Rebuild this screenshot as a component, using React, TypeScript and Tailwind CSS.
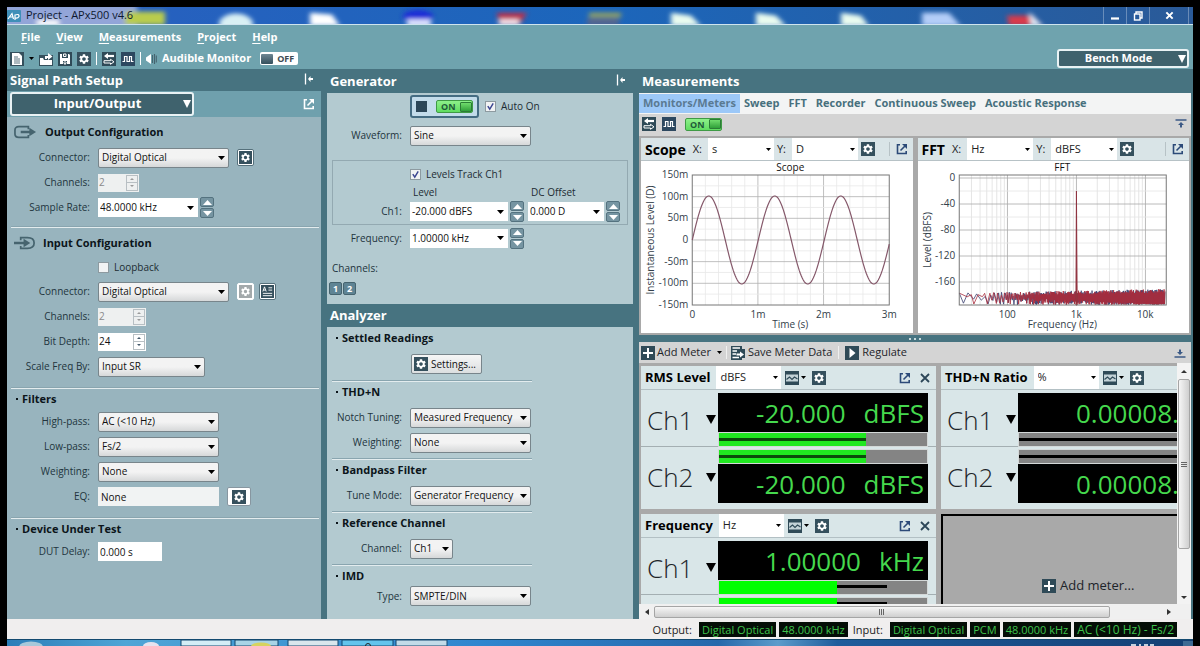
import type { ReactNode } from "react";
import clsx from "clsx";
import { MdSettings } from "react-icons/md";

/* ---------- icons ---------- */

function GearIcon({ muted = false, small = false }: { muted?: boolean; small?: boolean }) {
  return (
    <span
      className={clsx(
        "flex shrink-0 items-center justify-center text-white",
        small ? "size-[13px]" : "size-[14px]",
        muted ? "bg-[#a3a9ab]" : "bg-[#35505d]",
      )}
    >
      <MdSettings className={small ? "size-[11px]" : "size-[12px]"} />
    </span>
  );
}

function LoopIcon() {
  return (
    <svg viewBox="0 0 14 14" className="size-[14px] shrink-0">
      <rect width="14" height="14" fill="#2f4a57" />
      <path d="M12 4H5" stroke="#fff" strokeWidth="2.200" />
      <path d="M6 1L2 4L6 7z" fill="#fff" />
      <path d="M2 8.700H8.500V7.300L12 9.800L8.500 12.300V11H2z" fill="none" stroke="#fff" />
    </svg>
  );
}

function PulseIcon() {
  return (
    <svg viewBox="0 0 14 14" className="size-[14px] shrink-0">
      <rect width="14" height="14" fill="#2d4860" />
      <path d="M1.500 9.500H3.500V4.500H6V9.500H8.500V4.500H10.500V9.500H12.500" fill="none" stroke="#fff" strokeWidth="1.200" />
    </svg>
  );
}

function PopOutIcon({ color = "#2c4a78" }: { color?: string }) {
  return (
    <svg viewBox="0 0 12 12" className="size-[12px] shrink-0" fill="none" stroke={color} strokeWidth="1.600">
      <path d="M4 1.800H1.500V10.500H10.200V8" />
      <path d="M4.500 7.500L9.500 2.500" />
      <path d="M6 1H11V6z" fill={color} stroke="none" />
    </svg>
  );
}

function CollapseIcon() {
  return (
    <svg viewBox="0 0 12 12" className="size-[12px]">
      <path d="M2.500 0.500V11.500" stroke="#fff" strokeWidth="1.300" />
      <path d="M5 6L7.500 3V5H10V7H7.500V9z" fill="#fff" />
    </svg>
  );
}

function DockIcon({ up = false }: { up?: boolean }) {
  return (
    <svg viewBox="0 0 12 10" className="h-[10px] w-[12px]">
      <g transform={up ? "rotate(180 6 5)" : undefined}>
        <path d="M0.500 1H11.500" stroke="#3c5a86" strokeWidth="1.500" />
        <path d="M6 3L9 6H7V8.500H5V6H3z" fill="#3c5a86" />
      </g>
    </svg>
  );
}

function GraphIcon() {
  return (
    <svg viewBox="0 0 14 14" className="size-[14px] shrink-0">
      <rect width="14" height="14" fill="#2f4a57" />
      <rect x="1" y="3.500" width="12" height="7" fill="#c3d2d7" />
      <path d="M1.500 8.500L4.500 6L7 8.500L9.500 6L12.500 8" fill="none" stroke="#2f4a57" strokeWidth="1.200" />
    </svg>
  );
}

function PlusIcon() {
  return (
    <svg viewBox="0 0 14 14" className="size-[14px] shrink-0">
      <rect width="14" height="14" fill="#2f4a57" />
      <path d="M7 2V12M2 7H12" stroke="#fff" strokeWidth="2" />
    </svg>
  );
}

function Triangle({ className = "h-[4px] w-[7px] text-black", up = false }: { className?: string; up?: boolean }) {
  return (
    <svg viewBox="0 0 8 4" preserveAspectRatio="none" className={clsx("shrink-0", className)}>
      <path d={up ? "M0 4H8L4 0z" : "M0 0H8L4 4z"} fill="currentColor" />
    </svg>
  );
}

/* ---------- form controls ---------- */

type FieldProps = { label: string; value: string; w: string };

function Select({ label, value, w }: FieldProps) {
  return (
    <span className={clsx("grid h-5 shrink-0 items-center", w)}>
      <select
        aria-label={label}
        defaultValue={value}
        className="col-start-1 row-start-1 h-5 w-full appearance-none rounded-[2px] border border-[#78858b] bg-linear-to-b from-[#f3f3f3] from-50% to-[#d6d8d9] pl-[3px] text-[10px] text-[#111]"
      >
        <option>{value}</option>
      </select>
      <Triangle className="pointer-events-none col-start-1 row-start-1 mr-[4px] h-[4px] w-[7px] justify-self-end text-black" />
    </span>
  );
}

function FlatSelect({ label, value, w }: FieldProps) {
  return (
    <span className={clsx("grid h-full shrink-0 items-center bg-white", w)}>
      <select
        aria-label={label}
        defaultValue={value}
        className="col-start-1 row-start-1 h-full w-full appearance-none pl-[4px] text-[11px] text-[#222]"
      >
        <option>{value}</option>
      </select>
      <Triangle className="pointer-events-none col-start-1 row-start-1 mr-[3px] h-[3px] w-[5px] justify-self-end text-black" />
    </span>
  );
}

function BigSpinner({ label }: { label: string }) {
  return (
    <span className="flex w-[14px] shrink-0 flex-col gap-[1px]">
      <button aria-label={`Increase ${label}`} className="flex h-[10px] items-center justify-center rounded-[2px] border border-[#54727f] bg-[#7695a2]">
        <Triangle up className="h-[5px] w-[9px] text-white" />
      </button>
      <button aria-label={`Decrease ${label}`} className="flex h-[10px] items-center justify-center rounded-[2px] border border-[#54727f] bg-[#7695a2]">
        <Triangle className="h-[5px] w-[9px] text-white" />
      </button>
    </span>
  );
}

function Combo({ label, value, w }: FieldProps) {
  return (
    <span className="flex items-center gap-[2px]">
      <span className={clsx("flex h-[19px] items-center bg-white pr-[4px]", w)}>
        <input aria-label={label} defaultValue={value} className="w-full min-w-0 bg-transparent pl-[2px] text-[10px] text-[#111]" />
        <button aria-label={`${label} choices`}>
          <Triangle />
        </button>
      </span>
      <BigSpinner label={label} />
    </span>
  );
}

function NumberBox({ label, value, w, disabled = false }: FieldProps & { disabled?: boolean }) {
  const tone = disabled ? "text-[#9a9a9a]" : "text-[#44586a]";
  return (
    <span className={clsx("flex h-[18px] items-center pr-[1px]", w, disabled ? "bg-[#eef0f0]" : "bg-white")}>
      <input
        aria-label={label}
        defaultValue={value}
        disabled={disabled}
        className={clsx("w-full min-w-0 bg-transparent pl-[1px] text-[10px]", disabled ? "text-[#8a8a8a]" : "text-[#111]")}
      />
      <span className={clsx("flex w-[12px] shrink-0 flex-col", tone)}>
        <button aria-label={`Increase ${label}`} disabled={disabled} className="flex h-[8px] items-center justify-center border border-[#b8bfc3]">
          <Triangle up className="h-[2px] w-[4px]" />
        </button>
        <button aria-label={`Decrease ${label}`} disabled={disabled} className="flex h-[8px] items-center justify-center border border-t-0 border-[#b8bfc3]">
          <Triangle className="h-[2px] w-[4px]" />
        </button>
      </span>
    </span>
  );
}

function Check({ children, checked = false }: { children: string; checked?: boolean }) {
  return (
    <label className="flex items-center gap-[5px] text-[10px] text-[#1d2c33]">
      <span className="grid size-[11px] place-items-center">
        <input
          type="checkbox"
          defaultChecked={checked}
          className="peer col-start-1 row-start-1 size-[11px] appearance-none border border-[#8d9aa0] bg-[#f1f3f4]"
        />
        <svg viewBox="0 0 10 10" className="pointer-events-none col-start-1 row-start-1 hidden size-[9px] peer-checked:block">
          <path d="M2 4.500L4.200 8L8 1.500" fill="none" stroke="#3a4590" strokeWidth="1.600" />
        </svg>
      </span>
      {children}
    </label>
  );
}

function OnSwitch() {
  return (
    <button
      aria-pressed="true"
      className="flex h-[13px] w-[37px] items-center justify-between rounded-[2px] border border-[#3f9a45] bg-linear-to-b from-[#8df08a] to-[#5fdc60] pl-[4px] text-[9px] leading-none font-bold text-[#1f5a3a]"
    >
      ON
      <span className="h-[10px] w-[12px] rounded-[1px] border border-[#2c7d36] bg-linear-to-b from-[#6fdc6c] to-[#2fa03a]" />
    </button>
  );
}

function IconButton({ label, children, className }: { label: string; children: ReactNode; className?: string }) {
  return (
    <button aria-label={label} className={clsx("flex shrink-0 items-center justify-center", className)}>
      {children}
    </button>
  );
}

function Row({ label, labelW, children, h = "h-[25px]" }: { label: string; labelW: string; children: ReactNode; h?: string }) {
  return (
    <div className={clsx("flex items-center gap-[8px]", h)}>
      <span className={clsx("shrink-0 text-right text-[10px] whitespace-nowrap text-[#22343d]", labelW)}>{label}</span>
      {children}
    </div>
  );
}

function BulletTitle({ children }: { children: string }) {
  return (
    <h3 className="flex h-[20px] items-center gap-[4px] pl-[9px] text-[11px] font-bold text-[#0c151a]">
      <span className="size-[2px] bg-[#0c151a]" />
      {children}
    </h3>
  );
}

function Rule({ className }: { className?: string }) {
  return <hr className={clsx("h-[2px] border-0 border-b border-b-[#e3ecee] bg-[#89a5af]", className)} />;
}

/* ---------- window chrome ---------- */

function TitleBar() {
  return (
    <header className="relative flex h-[18px] shrink-0 items-center overflow-hidden border-b border-[#cfe4ee]">
      <svg viewBox="0 0 1186 18" preserveAspectRatio="none" className="absolute inset-0 h-full w-full">
        <defs>
          <filter id="glass" x="-20%" y="-50%" width="140%" height="200%">
            <feGaussianBlur stdDeviation="2.500" />
          </filter>
          <linearGradient id="sky">
            <stop offset="0" stopColor="#2a5fc0" />
            <stop offset="0.500" stopColor="#1c66bb" />
            <stop offset="1" stopColor="#2a5a98" />
          </linearGradient>
        </defs>
        <rect width="1186" height="18" fill="url(#sky)" />
        <g filter="url(#glass)">
          <rect x="-10" y="-4" width="140" height="26" fill="#93a5d8" />
          <rect x="118" y="5" width="40" height="14" fill="#b9cc4e" />
          <rect x="30" y="14" width="22" height="6" fill="#fff" />
          <ellipse cx="229" cy="18" rx="17" ry="11" fill="#d9f0f4" />
          <path d="M303 6L325 8L333 20H303z" fill="#fff" />
          <ellipse cx="411" cy="10" rx="15" ry="7" fill="#1d2ed6" />
          <rect x="400" y="13" width="24" height="8" fill="#dfe4ff" />
          <path d="M490 6H520L512 20H492z" fill="#b8304e" />
          <rect x="492" y="13" width="20" height="6" fill="#f5e6ee" />
          <rect x="582" y="6" width="32" height="5" fill="#93a063" />
          <rect x="580" y="12" width="32" height="8" fill="#54658f" />
          <path d="M664 6L684 9L694 20H664z" fill="#e9fbef" />
          <path d="M749 6L769 9L779 20H749z" fill="#e9fbef" />
          <path d="M834 6L854 9L862 20H834z" fill="#e9fbef" />
          <path d="M915 6H942L954 20H915z" fill="#b3cdf8" />
          <path d="M1000 9H1026L1036 20H1002z" fill="#d83a4c" />
          <path d="M1022 5L1036 20H1024z" fill="#dfeaf6" />
        </g>
      </svg>
      <span className="relative flex items-center gap-[5px]">
        <svg viewBox="0 0 14 12" className="h-[12px] w-[14px]">
          <rect width="14" height="12" rx="1" fill="#3f8fb8" />
          <path d="M1 9L5 3.500L6.500 9M3 7H6.500M8 10V5Q12.500 3.500 12 6.500Q11 8.500 8 8" fill="none" stroke="#fff" strokeWidth="1.200" />
        </svg>
        <h1 className="text-[11px] text-[#0d1830]">Project - APx500 v4.6</h1>
      </span>
      <span className="relative mr-[4px] ml-auto flex h-full text-white">
        <IconButton label="Minimize" className="w-[23px] border-l border-white/30">
          <svg viewBox="0 0 10 10" className="size-[10px]">
            <path d="M1 7.500H9" stroke="#fff" strokeWidth="2.200" />
          </svg>
        </IconButton>
        <IconButton label="Restore" className="w-[23px] border-l border-white/30">
          <svg viewBox="0 0 10 10" className="size-[10px]" fill="none" stroke="#fff" strokeWidth="1.400">
            <path d="M3 3V1H9V7H7" />
            <rect x="1.500" y="3" width="5.500" height="6" />
          </svg>
        </IconButton>
        <IconButton label="Close" className="w-[40px] border-x border-white/30">
          <svg viewBox="0 0 10 10" className="size-[9px]">
            <path d="M1.500 1.500L8.500 8.500M8.500 1.500L1.500 8.500" stroke="#fff" strokeWidth="2.200" />
          </svg>
        </IconButton>
      </span>
    </header>
  );
}

const menus: [string, string][] = [
  ["F", "ile"],
  ["V", "iew"],
  ["M", "easurements"],
  ["P", "roject"],
  ["H", "elp"],
];

function ModeButton({ children, className }: { children: string; className: string }) {
  return (
    <button
      className={clsx(
        "flex items-center rounded-[3px] border-2 border-[#e9f2f4] bg-[#3f626d] font-bold text-white",
        className,
      )}
    >
      <span className="flex-1 text-center">{children}</span>
      <Triangle className="mr-[1px] h-[8px] w-[8px] text-white" />
    </button>
  );
}

function MenuAndToolbar() {
  return (
    <div className="flex h-[44px] shrink-0 items-end justify-between bg-[#6fa3ae] pr-[4px]">
      <div className="flex h-full flex-col">
        <nav className="flex h-[25px] items-center gap-[16px] pl-[14px] text-[11px] font-bold text-white">
          {menus.map(([key, rest]) => (
            <a key={key} href="#menu">
              <span className="underline underline-offset-2">{key}</span>
              {rest}
            </a>
          ))}
        </nav>
        <div className="flex h-[17px] items-center gap-[5px] pl-[3px]">
          <IconButton label="New" className="gap-[5px]">
            <svg viewBox="0 0 14 14" className="size-[14px]">
              <rect width="14" height="14" fill="#35505d" />
              <path d="M2 1H9L12 4V13H2z" fill="#fff" />
              <path d="M4 5H8M4 7H10M4 9H10M4 11H10" stroke="#5d7580" strokeWidth="1" />
            </svg>
            <Triangle className="h-[3px] w-[5px] text-black" />
          </IconButton>
          <IconButton label="Open">
            <svg viewBox="0 0 14 14" className="size-[14px]">
              <rect y="3" width="14" height="11" fill="#35505d" />
              <path d="M1 13V6H4L5 8H13V13z" fill="#fff" />
              <path d="M6 7V4H9V1L13.500 4.500L9 8V6H8V7z" fill="#fff" />
            </svg>
          </IconButton>
          <IconButton label="Save">
            <svg viewBox="0 0 14 14" className="size-[14px]">
              <rect width="14" height="14" fill="#2f4a57" />
              <path d="M2 2H4V6H10V2H11L12 3V12H9V9H5V12H2z" fill="#fff" />
              <path d="M7 8V12M5.500 10.500L7 12.500L8.500 10.500M5.500 2H8V4.500H5.500z" stroke="#fff" fill="none" />
            </svg>
          </IconButton>
          <IconButton label="Settings">
            <GearIcon />
          </IconButton>
          <span className="h-[13px] w-[1px] bg-white" />
          <IconButton label="Signal path">
            <LoopIcon />
          </IconButton>
          <IconButton label="Generator pulse">
            <PulseIcon />
          </IconButton>
          <span className="h-[13px] w-[1px] bg-white" />
          <svg viewBox="0 0 11 12" className="h-[12px] w-[11px]">
            <path d="M0 4.500L5 1V11L0 7.500z" fill="#fff" />
            <path d="M6.500 2V10M8.500 1V11M10.300 2.500V9.500" stroke="#46646f" strokeWidth="1.100" />
          </svg>
          <span className="text-[11px] font-bold text-white">Audible Monitor</span>
          <button
            aria-pressed="false"
            className="ml-[4px] flex h-[13px] w-[38px] items-center justify-between rounded-[2px] bg-white pr-[4px] pl-[1px] text-[9px] leading-none font-bold text-[#3c4a52]"
          >
            <span className="h-[10px] w-[12px] rounded-[1px] bg-linear-to-b from-[#6f8793] to-[#35505d]" />
            OFF
          </button>
        </div>
      </div>
      <ModeButton className="mb-[1px] h-[19px] w-[132px] text-[11px]">Bench Mode</ModeButton>
    </div>
  );
}

function PanelHeader({ title, collapsible = false, h = "h-[24px]" }: { title: string; collapsible?: boolean; h?: string }) {
  return (
    <div className={clsx("flex shrink-0 items-center justify-between pr-[6px] pl-[3px]", h)}>
      <h2 className="text-[13px] leading-none font-bold text-white">{title}</h2>
      {collapsible && (
        <IconButton label={`Collapse ${title}`} className="pb-[2px]">
          <CollapseIcon />
        </IconButton>
      )}
    </div>
  );
}

/* ---------- signal path ---------- */

const LW = "w-[83px]";

function SignalPath() {
  return (
    <section className="flex w-[314px] shrink-0 flex-col">
      <PanelHeader title="Signal Path Setup" collapsible h="h-[22px]" />
      <div className="flex h-[26px] items-center justify-between bg-[#6fa0ad] pr-[6px] pl-[3px]">
        <ModeButton className="h-[24px] w-[184px] text-[13px]">Input/Output</ModeButton>
        <IconButton label="Open signal path">
          <PopOutIcon color="#fff" />
        </IconButton>
      </div>
      <div className="min-h-0 flex-1 bg-[#98b4be]">
        <h3 className="flex h-[28px] items-center gap-[8px] pt-[2px] pl-[7px] text-[11px] font-bold text-[#0c151a]">
          <svg viewBox="0 0 24 14" className="h-[14px] w-[23px]" fill="none">
            <path d="M15 4V1.500H5Q1 1.500 1 5V9Q1 12.500 5 12.500H15V10" stroke="#46646f" strokeWidth="1.800" />
            <path d="M7 7H17" stroke="#46646f" strokeWidth="2.600" />
            <path d="M16 2.500L23 7L16 11.500z" fill="#46646f" />
          </svg>
          Output Configuration
        </h3>
        <Row label="Connector:" labelW={LW}>
          <Select label="Output connector" value="Digital Optical" w="w-[131px]" />
          <IconButton label="Output settings" className="size-[17px] rounded-[2px] border border-[#55707b] bg-white">
            <GearIcon small />
          </IconButton>
        </Row>
        <Row label="Channels:" labelW={LW}>
          <NumberBox label="Output channels" value="2" w="w-[41px]" disabled />
        </Row>
        <Row label="Sample Rate:" labelW={LW}>
          <Combo label="Sample rate" value="48.0000 kHz" w="w-[100px]" />
        </Row>
        <Rule className="mt-[6px] mr-[2px] ml-[4px]" />
        <h3 className="flex h-[28px] items-center gap-[6px] pt-[2px] pl-[7px] text-[11px] font-bold text-[#0c151a]">
          <svg viewBox="0 0 24 14" className="h-[14px] w-[23px]" fill="none">
            <path d="M7 4V1.500H14Q21 1.500 21 7Q21 12.500 14 12.500H7V10" stroke="#46646f" strokeWidth="1.800" />
            <path d="M0 7H11" stroke="#46646f" strokeWidth="2.600" />
            <path d="M10 2.500L17 7L10 11.500z" fill="#46646f" />
          </svg>
          Input Configuration
        </h3>
        <div className="flex h-[23px] items-center pl-[91px]">
          <Check>Loopback</Check>
        </div>
        <Row label="Connector:" labelW={LW}>
          <Select label="Input connector" value="Digital Optical" w="w-[131px]" />
          <span className="flex gap-[5px]">
            <IconButton label="Input settings" className="size-[17px] rounded-[2px] border border-white bg-white">
              <GearIcon muted small />
            </IconButton>
            <IconButton label="Input metadata" className="size-[17px] rounded-[2px] border border-[#55707b] bg-white">
              <svg viewBox="0 0 14 14" className="size-[13px]">
                <rect width="14" height="14" fill="#35505d" />
                <path d="M2 7L3.800 2L5.600 7M2.500 5.500H5M8 3H12M8 5.500H12M2 9H12M2 11.500H12" stroke="#fff" fill="none" />
              </svg>
            </IconButton>
          </span>
        </Row>
        <Row label="Channels:" labelW={LW}>
          <NumberBox label="Input channels" value="2" w="w-[48px]" disabled />
        </Row>
        <Row label="Bit Depth:" labelW={LW}>
          <NumberBox label="Bit depth" value="24" w="w-[48px]" />
        </Row>
        <Row label="Scale Freq By:" labelW={LW}>
          <Select label="Scale frequency by" value="Input SR" w="w-[107px]" />
        </Row>
        <Rule className="mt-[8px] mr-[2px] ml-[4px]" />
        <BulletTitle>Filters</BulletTitle>
        <Row label="High-pass:" labelW={LW}>
          <Select label="High-pass" value="AC (&lt;10 Hz)" w="w-[121px]" />
        </Row>
        <Row label="Low-pass:" labelW={LW}>
          <Select label="Low-pass" value="Fs/2" w="w-[121px]" />
        </Row>
        <Row label="Weighting:" labelW={LW}>
          <Select label="Filter weighting" value="None" w="w-[121px]" />
        </Row>
        <Row label="EQ:" labelW={LW}>
          <input aria-label="EQ" defaultValue="None" className="h-[19px] w-[121px] bg-[#f1f3f3] pl-[3px] text-[10px] text-[#111]" />
          <IconButton label="EQ settings" className="h-[19px] w-[24px] rounded-[2px] border border-[#8796a0] bg-white">
            <GearIcon />
          </IconButton>
        </Row>
        <Rule className="mt-[8px] mr-[2px] ml-[4px]" />
        <BulletTitle>Device Under Test</BulletTitle>
        <Row label="DUT Delay:" labelW={LW}>
          <input aria-label="DUT delay" defaultValue="0.000 s" className="h-[19px] w-[64px] bg-white pl-[2px] text-[10px] text-[#111]" />
        </Row>
      </div>
    </section>
  );
}

/* ---------- generator and analyzer ---------- */

const MW = "w-[75px]";

function GeneratorAnalyzer() {
  return (
    <div className="flex w-[306px] shrink-0 flex-col">
      <PanelHeader title="Generator" collapsible />
      <section className="h-[211px] shrink-0 bg-[#b3cad0] pt-[1px]">
        <div className="flex h-[25px] items-center gap-[6px] pl-[83px]">
          <span className="flex h-[23px] w-[69px] items-center justify-between rounded-[3px] border-2 border-[#446c82] bg-[#c3dcea] px-[4px]">
            <span className="size-[11px] bg-[#2c4758]" />
            <OnSwitch />
          </span>
          <Check checked>Auto On</Check>
        </div>
        <Row label="Waveform:" labelW={MW} h="h-[33px]">
          <Select label="Waveform" value="Sine" w="w-[121px]" />
        </Row>
        <div className="mx-[5px] mt-[8px] h-[65px] border border-[#93a9b1] pt-[3px]">
          <div className="flex h-[20px] items-center pl-[77px]">
            <Check checked>Levels Track Ch1</Check>
          </div>
          <div className="flex h-[17px] items-center pl-[80px] text-[10px] text-[#1d2c33]">
            <span className="w-[118px]">Level</span>
            <span>DC Offset</span>
          </div>
          <div className="flex h-[21px] items-center">
            <span className="mr-[8px] w-[69px] text-right text-[10px] text-[#22343d]">Ch1:</span>
            <span className="mr-[4px]">
              <Combo label="Level" value="-20.000 dBFS" w="w-[98px]" />
            </span>
            <Combo label="DC offset" value="0.000 D" w="w-[76px]" />
          </div>
        </div>
        <Row label="Frequency:" labelW={MW} h="h-[26px]">
          <Combo label="Frequency" value="1.00000 kHz" w="w-[98px]" />
        </Row>
        <p className="mt-[9px] pl-[5px] text-[10px] leading-[16px] text-[#22343d]">Channels:</p>
        <div className="mt-[6px] flex gap-[1px] pl-[2px]">
          {["1", "2"].map((n) => (
            <button key={n} className="size-[13px] rounded-[2px] border border-[#46646f] bg-[#5f8494] text-[9px] leading-none font-bold text-white">
              {n}
            </button>
          ))}
        </div>
      </section>
      <PanelHeader title="Analyzer" h="h-[23px]" />
      <section className="min-h-0 flex-1 bg-[#b3cad0] pt-[1px]">
        <BulletTitle>Settled Readings</BulletTitle>
        <div className="flex h-[32px] items-center pl-[84px]">
          <button className="flex h-[20px] w-[71px] items-center gap-[3px] rounded-[2px] border border-[#78858b] bg-linear-to-b from-[#f6f6f6] to-[#dcdfe0] pl-[2px] text-[10px] text-[#111]">
            <GearIcon />
            Settings...
          </button>
        </div>
        <Rule className="ml-[5px] w-[200px]" />
        <BulletTitle>THD+N</BulletTitle>
        <div className="pt-[3px]">
          <Row label="Notch Tuning:" labelW={MW}>
            <Select label="Notch tuning" value="Measured Frequency" w="w-[121px]" />
          </Row>
          <Row label="Weighting:" labelW={MW}>
            <Select label="Analyzer weighting" value="None" w="w-[121px]" />
          </Row>
        </div>
        <Rule className="mt-[3px] ml-[5px] w-[200px]" />
        <BulletTitle>Bandpass Filter</BulletTitle>
        <div className="pt-[3px]">
          <Row label="Tune Mode:" labelW={MW}>
            <Select label="Tune mode" value="Generator Frequency" w="w-[121px]" />
          </Row>
        </div>
        <Rule className="mt-[3px] ml-[5px] w-[200px]" />
        <BulletTitle>Reference Channel</BulletTitle>
        <div className="pt-[3px]">
          <Row label="Channel:" labelW={MW}>
            <Select label="Reference channel" value="Ch1" w="w-[43px]" />
          </Row>
        </div>
        <Rule className="mt-[3px] ml-[5px] w-[200px]" />
        <BulletTitle>IMD</BulletTitle>
        <Row label="Type:" labelW={MW} h="h-[20px]">
          <Select label="IMD type" value="SMPTE/DIN" w="w-[121px]" />
        </Row>
      </section>
    </div>
  );
}

/* ---------- charts ---------- */

const axis = "#33404a";

function ScopeChart() {
  const pts: string[] = [];
  for (let x = 0; x <= 197; x += 1) {
    pts.push(`${51 + x},${(79 - 44 * Math.sin((x / 66) * 2 * Math.PI)).toFixed(1)}`);
  }
  const yLabels = ["150m", "100m", "50m", "0", "-50m", "-100m", "-150m"];
  return (
    <svg viewBox="0 0 271 172" className="h-[172px] w-full font-['Open_Sans',sans-serif] text-[10px]" fill={axis}>
      {Array.from({ length: 14 }, (_, i) => (
        <path key={i} d={`M${51 + (i + 1) * 13.13} 14V144`} stroke={i % 5 === 4 ? "#b0b0b0" : "#e8e8e8"} strokeWidth="0.800" />
      ))}
      {Array.from({ length: 11 }, (_, i) => (
        <path key={i} d={`M51 ${14 + (i + 1) * 10.83}H248`} stroke={i % 2 === 1 ? "#b0b0b0" : "#e8e8e8"} strokeWidth="0.800" />
      ))}
      <rect x="51" y="14" width="197" height="130" fill="none" stroke="#777" />
      <polyline points={pts.join(" ")} fill="none" stroke="#85586a" strokeWidth="1.200" />
      <text x="149" y="10" textAnchor="middle" fill="#111">Scope</text>
      {yLabels.map((t, i) => (
        <text key={t} x="47" y={17 + i * 21.67} textAnchor="end">{t}</text>
      ))}
      {["0", "1m", "2m", "3m"].map((t, i) => (
        <text key={t} x={51 + i * 65.67} y="157" textAnchor="middle">{t}</text>
      ))}
      <text x="149" y="167" textAnchor="middle">Time (s)</text>
      <text transform="translate(13 79) rotate(-90)" textAnchor="middle">Instantaneous Level (D)</text>
    </svg>
  );
}

function noiseTrace(seed: number) {
  let s = seed;
  const rand = () => {
    s = (s * 16807) % 2147483647;
    return s / 2147483647;
  };
  const pts: string[] = [];
  let x = 0;
  let low = false;
  while (x < 206) {
    const t = x / 206;
    const y = low ? 144 - rand() * (10 - 9 * t) : 132 - 4 * t + rand() * 4;
    pts.push(`${(41 + x).toFixed(1)},${y.toFixed(1)}`);
    low = !low;
    x += Math.max(0.45, 6 * Math.exp(-t * 7) * (0.6 + rand() * 0.8));
  }
  return pts.join(" ");
}

function FftChart() {
  const lines: { x: number; major: boolean }[] = [];
  for (const decade of [10, 100, 1000, 10000]) {
    for (let n = 1; n < 10; n += 1) {
      const f = decade * n;
      if (f > 20 && f < 20000) lines.push({ x: 41 + 69 * Math.log10(f / 20), major: n === 1 });
    }
  }
  return (
    <svg viewBox="0 0 271 172" className="h-[172px] w-full font-['Open_Sans',sans-serif] text-[10px]" fill={axis}>
      {lines.map(({ x, major }) => (
        <path key={x} d={`M${x.toFixed(1)} 14V144`} stroke={major ? "#a8a8a8" : "#dedede"} strokeWidth="0.800" />
      ))}
      {Array.from({ length: 9 }, (_, i) => (
        <path key={i} d={`M41 ${17 + i * 13}H248`} stroke={i % 2 === 0 ? "#a8a8a8" : "#e4e4e4"} strokeWidth="0.800" />
      ))}
      <polyline points={noiseTrace(77)} fill="none" stroke="#3b3f6e" strokeWidth="0.800" />
      <polyline points={noiseTrace(4211)} fill="none" stroke="#a82c3c" strokeWidth="0.800" />
      <path d="M157.700 144L158.200 30L158.900 144z" fill="#a3343f" stroke="#8f3340" strokeWidth="1" />
      <rect x="41" y="14" width="207" height="130" fill="none" stroke="#777" />
      <text x="144" y="10" textAnchor="middle" fill="#111">FFT</text>
      {["0", "-40", "-80", "-120", "-160"].map((t, i) => (
        <text key={t} x="37" y={20 + i * 26} textAnchor="end">{t}</text>
      ))}
      {["100", "1k", "10k"].map((t, i) => (
        <text key={t} x={89 + i * 69} y="157" textAnchor="middle">{t}</text>
      ))}
      <text x="144" y="167" textAnchor="middle">Frequency (Hz)</text>
      <text transform="translate(13 79) rotate(-90)" textAnchor="middle">Level (dBFS)</text>
    </svg>
  );
}

function ChartCard({ title, x, y, children }: { title: string; x: string; y: string; children: ReactNode }) {
  return (
    <article className="flex min-w-0 flex-1 flex-col bg-white">
      <div className="flex h-[23px] items-center border-b border-[#b7c2c6] bg-[#d9e4e7] pr-[5px] pl-[4px] text-[11px] text-[#222]">
        <h3 className="mr-[7px] text-[14px] font-bold text-black">{title}</h3>
        <span className="mr-[6px]">X:</span>
        <FlatSelect label={`${title} X unit`} value={x} w="w-[66px]" />
        <span className="mr-[6px] ml-[3px]">Y:</span>
        <FlatSelect label={`${title} Y unit`} value={y} w="w-[66px]" />
        <IconButton label={`${title} settings`} className="ml-[3px]">
          <GearIcon />
        </IconButton>
        <span className="mr-[6px] ml-auto h-[14px] w-[1px] bg-[#b7c2c6]" />
        <IconButton label={`Open ${title}`}>
          <PopOutIcon />
        </IconButton>
      </div>
      {children}
    </article>
  );
}

/* ---------- meters ---------- */

function Readout({ value, unit }: { value: string; unit?: string }) {
  return (
    <output
      className={clsx(
        "flex h-[39px] items-center gap-[18px] bg-black text-[26px] leading-none whitespace-nowrap text-[#45d84d]",
        unit ? "justify-end pr-[4px]" : "pl-[58px]",
      )}
    >
      <span>{value}</span>
      {unit && <span>{unit}</span>}
    </output>
  );
}

type Bar = "level" | "empty" | "peak";

function LevelBar({ kind }: { kind: Bar }) {
  return (
    <svg viewBox="0 0 210 15" preserveAspectRatio="none" className="block h-[15px] w-full">
      <rect width="210" height="15" fill="#d4d8d8" />
      <rect x="1" y="1" width="208" height="13" fill="#848484" />
      {kind === "level" && (
        <>
          <rect x="1" y="1" width="147" height="13" fill="#20e820" />
          <rect x="1" y="6" width="147" height="3" fill="#0b4a0b" />
        </>
      )}
      {kind === "empty" && <rect x="1" y="6" width="209" height="3" fill="#000" />}
      {kind === "peak" && (
        <>
          <rect x="1" y="1" width="118" height="13" fill="#00ff00" />
          <rect x="119" y="5" width="50" height="3" fill="#000" />
        </>
      )}
    </svg>
  );
}

function ChannelName({ children }: { children: string }) {
  return (
    <button className="flex w-[77px] shrink-0 items-center justify-between pr-[2px] pl-[6px] text-[26px] leading-none font-light text-[#1d2429]">
      {children}
      <Triangle className="h-[9px] w-[10px] text-black" />
    </button>
  );
}

type MeterProps = {
  title: string;
  unit: string;
  value: string;
  valueUnit?: string;
  bar: Bar;
  closable?: boolean;
  single?: boolean;
};

function MeterCard({ title, unit, value, valueUnit, bar, closable = false, single = false }: MeterProps) {
  return (
    <article className="w-[295px] shrink-0 bg-[#d9e6e8]">
      <div className="flex h-[24px] items-center border-b border-[#b3c0c4] pr-[6px] pl-[4px]">
        <h3 className="mr-[6px] text-[13px] font-bold whitespace-nowrap text-black">{title}</h3>
        <FlatSelect label={`${title} unit`} value={unit} w="w-[65px]" />
        <IconButton label={`${title} graph`} className="ml-[4px] gap-[2px]">
          <GraphIcon />
          <Triangle className="h-[3px] w-[5px] text-black" />
        </IconButton>
        <IconButton label={`${title} settings`} className="ml-[6px]">
          <GearIcon />
        </IconButton>
        {closable && (
          <span className="ml-auto flex items-center gap-[9px]">
            <IconButton label={`Open ${title}`}>
              <PopOutIcon />
            </IconButton>
            <IconButton label={`Close ${title}`}>
              <svg viewBox="0 0 10 10" className="size-[10px]">
                <path d="M1 1L9 9M9 1L1 9" stroke="#2c4658" strokeWidth="1.800" />
              </svg>
            </IconButton>
          </span>
        )}
      </div>
      <div className="flex h-[57px] border-b border-[#a4afb2] pt-[3px]">
        <ChannelName>Ch1</ChannelName>
        <div className="mr-[8px] min-w-0 flex-1">
          <Readout value={value} unit={valueUnit} />
          <LevelBar kind={bar} />
        </div>
      </div>
      {single ? (
        <div className="h-[62px] pt-[2px] pr-[8px] pl-[77px]">
          <LevelBar kind={bar} />
        </div>
      ) : (
        <div className="flex h-[62px] pt-[2px] pb-[4px]">
          <ChannelName>Ch2</ChannelName>
          <div className="mr-[8px] min-w-0 flex-1">
            <LevelBar kind={bar} />
            <Readout value={value} unit={valueUnit} />
          </div>
        </div>
      )}
    </article>
  );
}

function Meters() {
  return (
    <div className="flex min-h-0 flex-1 flex-col bg-[#f0f0f0]">
      <div className="flex min-h-0 flex-1">
        <div className="min-w-0 flex-1 overflow-hidden bg-[#a9a9a9] pt-[3px] pl-[2px]">
          <div className="grid w-max grid-cols-[295px_295px] gap-x-[5px] gap-y-[5px]">
            <MeterCard title="RMS Level" unit="dBFS" value="-20.000" valueUnit="dBFS" bar="level" closable />
            <MeterCard title="THD+N Ratio" unit="%" value="0.00008." bar="empty" />
            <MeterCard title="Frequency" unit="Hz" value="1.00000" valueUnit="kHz" bar="peak" closable single />
            <div className="flex items-center border-2 border-black pl-[99px]">
              <button className="flex items-center gap-[4px] text-[13px] text-[#1d2429]">
                <PlusIcon />
                Add meter...
              </button>
            </div>
          </div>
        </div>
        <div className="flex w-[14px] shrink-0 flex-col items-center bg-[#f3f3f3]">
          <IconButton label="Scroll up" className="h-[16px]">
            <Triangle up className="h-[3px] w-[6px] text-[#333]" />
          </IconButton>
          <div className="flex h-[170px] w-[12px] flex-col items-center justify-center gap-[1px] rounded-[2px] border border-[#a5a5a5] bg-linear-to-r from-[#f6f6f6] to-[#cfcfcf]">
            <span className="h-[1px] w-[6px] bg-[#666]" />
            <span className="h-[1px] w-[6px] bg-[#666]" />
            <span className="h-[1px] w-[6px] bg-[#666]" />
          </div>
          <IconButton label="Scroll down" className="mt-auto h-[14px]">
            <Triangle className="h-[3px] w-[6px] text-[#333]" />
          </IconButton>
        </div>
      </div>
      <div className="flex h-[15px] shrink-0 items-center pr-[16px]">
        <IconButton label="Scroll left" className="h-full w-[15px]">
          <svg viewBox="0 0 4 6" className="h-[6px] w-[4px]"><path d="M4 0V6L0 3z" fill="#333" /></svg>
        </IconButton>
        <div className="flex h-[12px] w-[85%] items-center justify-center gap-[1px] rounded-[2px] border border-[#a5a5a5] bg-linear-to-b from-[#f6f6f6] to-[#cfcfcf]">
          <span className="h-[6px] w-[1px] bg-[#666]" />
          <span className="h-[6px] w-[1px] bg-[#666]" />
          <span className="h-[6px] w-[1px] bg-[#666]" />
        </div>
        <IconButton label="Scroll right" className="ml-auto h-full w-[12px]">
          <svg viewBox="0 0 4 6" className="h-[6px] w-[4px]"><path d="M0 0V6L4 3z" fill="#333" /></svg>
        </IconButton>
      </div>
    </div>
  );
}

const tabs = ["Monitors/Meters", "Sweep", "FFT", "Recorder", "Continuous Sweep", "Acoustic Response"];

function Measurements() {
  return (
    <section className="flex min-w-0 flex-1 flex-col pr-[2px]">
      <PanelHeader title="Measurements" h="h-[24px]" />
      <div className="flex h-[21px] shrink-0 items-center bg-[#f3f4f4] text-[11px] font-bold text-[#47707d]">
        {tabs.map((tab, i) => (
          <button
            key={tab}
            className={clsx("h-[19px] px-[4px] whitespace-nowrap", i === 0 ? "bg-[#9cc8f8] text-[#5a7a92]" : "mr-[1px]")}
          >
            {tab}
          </button>
        ))}
      </div>
      <div className="flex h-[22px] shrink-0 items-center gap-[6px] bg-[#d4d4d4] px-[3px] pb-[2px]">
        <IconButton label="Loop"><LoopIcon /></IconButton>
        <IconButton label="Pulse"><PulseIcon /></IconButton>
        <span className="ml-[3px]"><OnSwitch /></span>
        <IconButton label="Dock charts" className="mr-[1px] ml-auto"><DockIcon /></IconButton>
      </div>
      <div className="flex h-[199px] shrink-0 gap-[5px] bg-[#a9a9a9] px-[2px] pt-[2px] pb-[2px]">
        <ChartCard title="Scope" x="s" y="D">
          <ScopeChart />
        </ChartCard>
        <ChartCard title="FFT" x="Hz" y="dBFS">
          <FftChart />
        </ChartCard>
      </div>
      <div className="flex h-[7px] shrink-0 items-center justify-center gap-[3px]">
        <span className="size-[2px] bg-[#c9dade]" />
        <span className="size-[2px] bg-[#c9dade]" />
        <span className="size-[2px] bg-[#c9dade]" />
      </div>
      <div className="flex h-[21px] shrink-0 items-center bg-[#d4d4d4] px-[2px] text-[11px] text-[#1d2429]">
        <button className="flex items-center gap-[2px]">
          <PlusIcon />
          Add Meter
          <Triangle className="ml-[4px] h-[3px] w-[5px] text-black" />
        </button>
        <span className="mx-[4px] h-[13px] w-[1px] bg-[#efefef]" />
        <button className="flex items-center gap-[3px]">
          <svg viewBox="0 0 14 14" className="size-[14px]">
            <path d="M0 0H11V3H14V12H11V14H0z" fill="#2f4a57" />
            <path d="M1.500 2H9M1.500 5H6M1.500 8H5M1.500 11.500H8" stroke="#fff" strokeWidth="1.600" />
            <path d="M5.500 7.500H9V5.500L13 8.500L9 11.500V9.500H5.500z" fill="#fff" />
          </svg>
          Save Meter Data
        </button>
        <span className="mx-[6px] h-[13px] w-[1px] bg-[#efefef]" />
        <button className="flex items-center gap-[3px]">
          <svg viewBox="0 0 14 14" className="size-[14px]">
            <rect width="14" height="14" fill="#2f4a57" />
            <path d="M4.500 2L10.500 7L4.500 12z" fill="#fff" />
          </svg>
          Regulate
        </button>
        <IconButton label="Dock meters" className="mr-[3px] ml-auto"><DockIcon up /></IconButton>
      </div>
      <Meters />
    </section>
  );
}

/* ---------- bottom ---------- */

function Chip({ children, className = "text-[11px]" }: { children: string; className?: string }) {
  return <span className={clsx("bg-[#040d06] px-[3px] leading-[15px] whitespace-nowrap text-[#3fc24c]", className)}>{children}</span>;
}

function StatusBar() {
  return (
    <footer className="flex h-[20px] shrink-0 items-center justify-end gap-[3px] bg-[#f0eeee] pr-[16px] text-[11px] text-[#222]">
      <span className="mr-[4px] leading-[15px]">Output:</span>
      <Chip>Digital Optical</Chip>
      <Chip>48.0000 kHz</Chip>
      <span className="mr-[4px] ml-[2px] leading-[15px]">Input:</span>
      <Chip>Digital Optical</Chip>
      <Chip>PCM</Chip>
      <Chip>48.0000 kHz</Chip>
      <Chip className="text-[12px]">AC (&lt;10 Hz) - Fs/2</Chip>
    </footer>
  );
}

function Taskbar() {
  return (
    <svg viewBox="0 0 1186 7" preserveAspectRatio="none" className="block h-[7px] w-full shrink-0">
      <defs>
        <linearGradient id="task">
          <stop offset="0" stopColor="#2b7db8" />
          <stop offset="0.100" stopColor="#4fa5d6" />
          <stop offset="0.400" stopColor="#2f86cf" />
          <stop offset="0.600" stopColor="#2668ab" />
          <stop offset="0.650" stopColor="#5c9ccb" />
          <stop offset="0.700" stopColor="#1f5c9c" />
          <stop offset="1" stopColor="#143e73" />
        </linearGradient>
      </defs>
      <rect width="1186" height="7" fill="url(#task)" />
      <ellipse cx="24" cy="8" rx="12" ry="5.500" fill="#a8c8da" />
      <ellipse cx="144" cy="7" rx="8" ry="4" fill="#e6e2ee" />
      <rect x="174" y="1" width="50" height="6" fill="#d4edf6" stroke="#12466e" />
      <rect x="228" y="1" width="43" height="6" fill="#a8d4e6" stroke="#12466e" />
      <ellipse cx="254" cy="7" rx="10" ry="3.500" fill="#d6d35e" />
      <rect x="281" y="1" width="50" height="6" fill="#d9e6ec" stroke="#12466e" />
      <rect x="335" y="1" width="51" height="6" fill="#63c4ec" stroke="#12466e" />
      <circle cx="361" cy="7" r="2.500" fill="none" stroke="#222" />
      <rect x="389" y="1" width="51" height="6" fill="#c2dbe8" stroke="#12466e" />
      <path d="M0 0.500H1186" stroke="#13496f" />
      <path d="M1124 6H1129M1132 6H1134M1137 6H1141M1143 6H1147" stroke="#fff" strokeWidth="1.500" />
      <rect x="1176" y="2" width="10" height="5" fill="#3f6a94" />
    </svg>
  );
}

export default function App() {
  return (
    <div className="flex h-screen flex-col overflow-hidden bg-black px-[7px] pt-[7px] font-['Open_Sans','Noto_Sans',sans-serif]">
      <TitleBar />
      <MenuAndToolbar />
      <main className="flex min-h-0 flex-1 gap-[6px] bg-[#477380]">
        <SignalPath />
        <GeneratorAnalyzer />
        <Measurements />
      </main>
      <StatusBar />
      <Taskbar />
    </div>
  );
}
